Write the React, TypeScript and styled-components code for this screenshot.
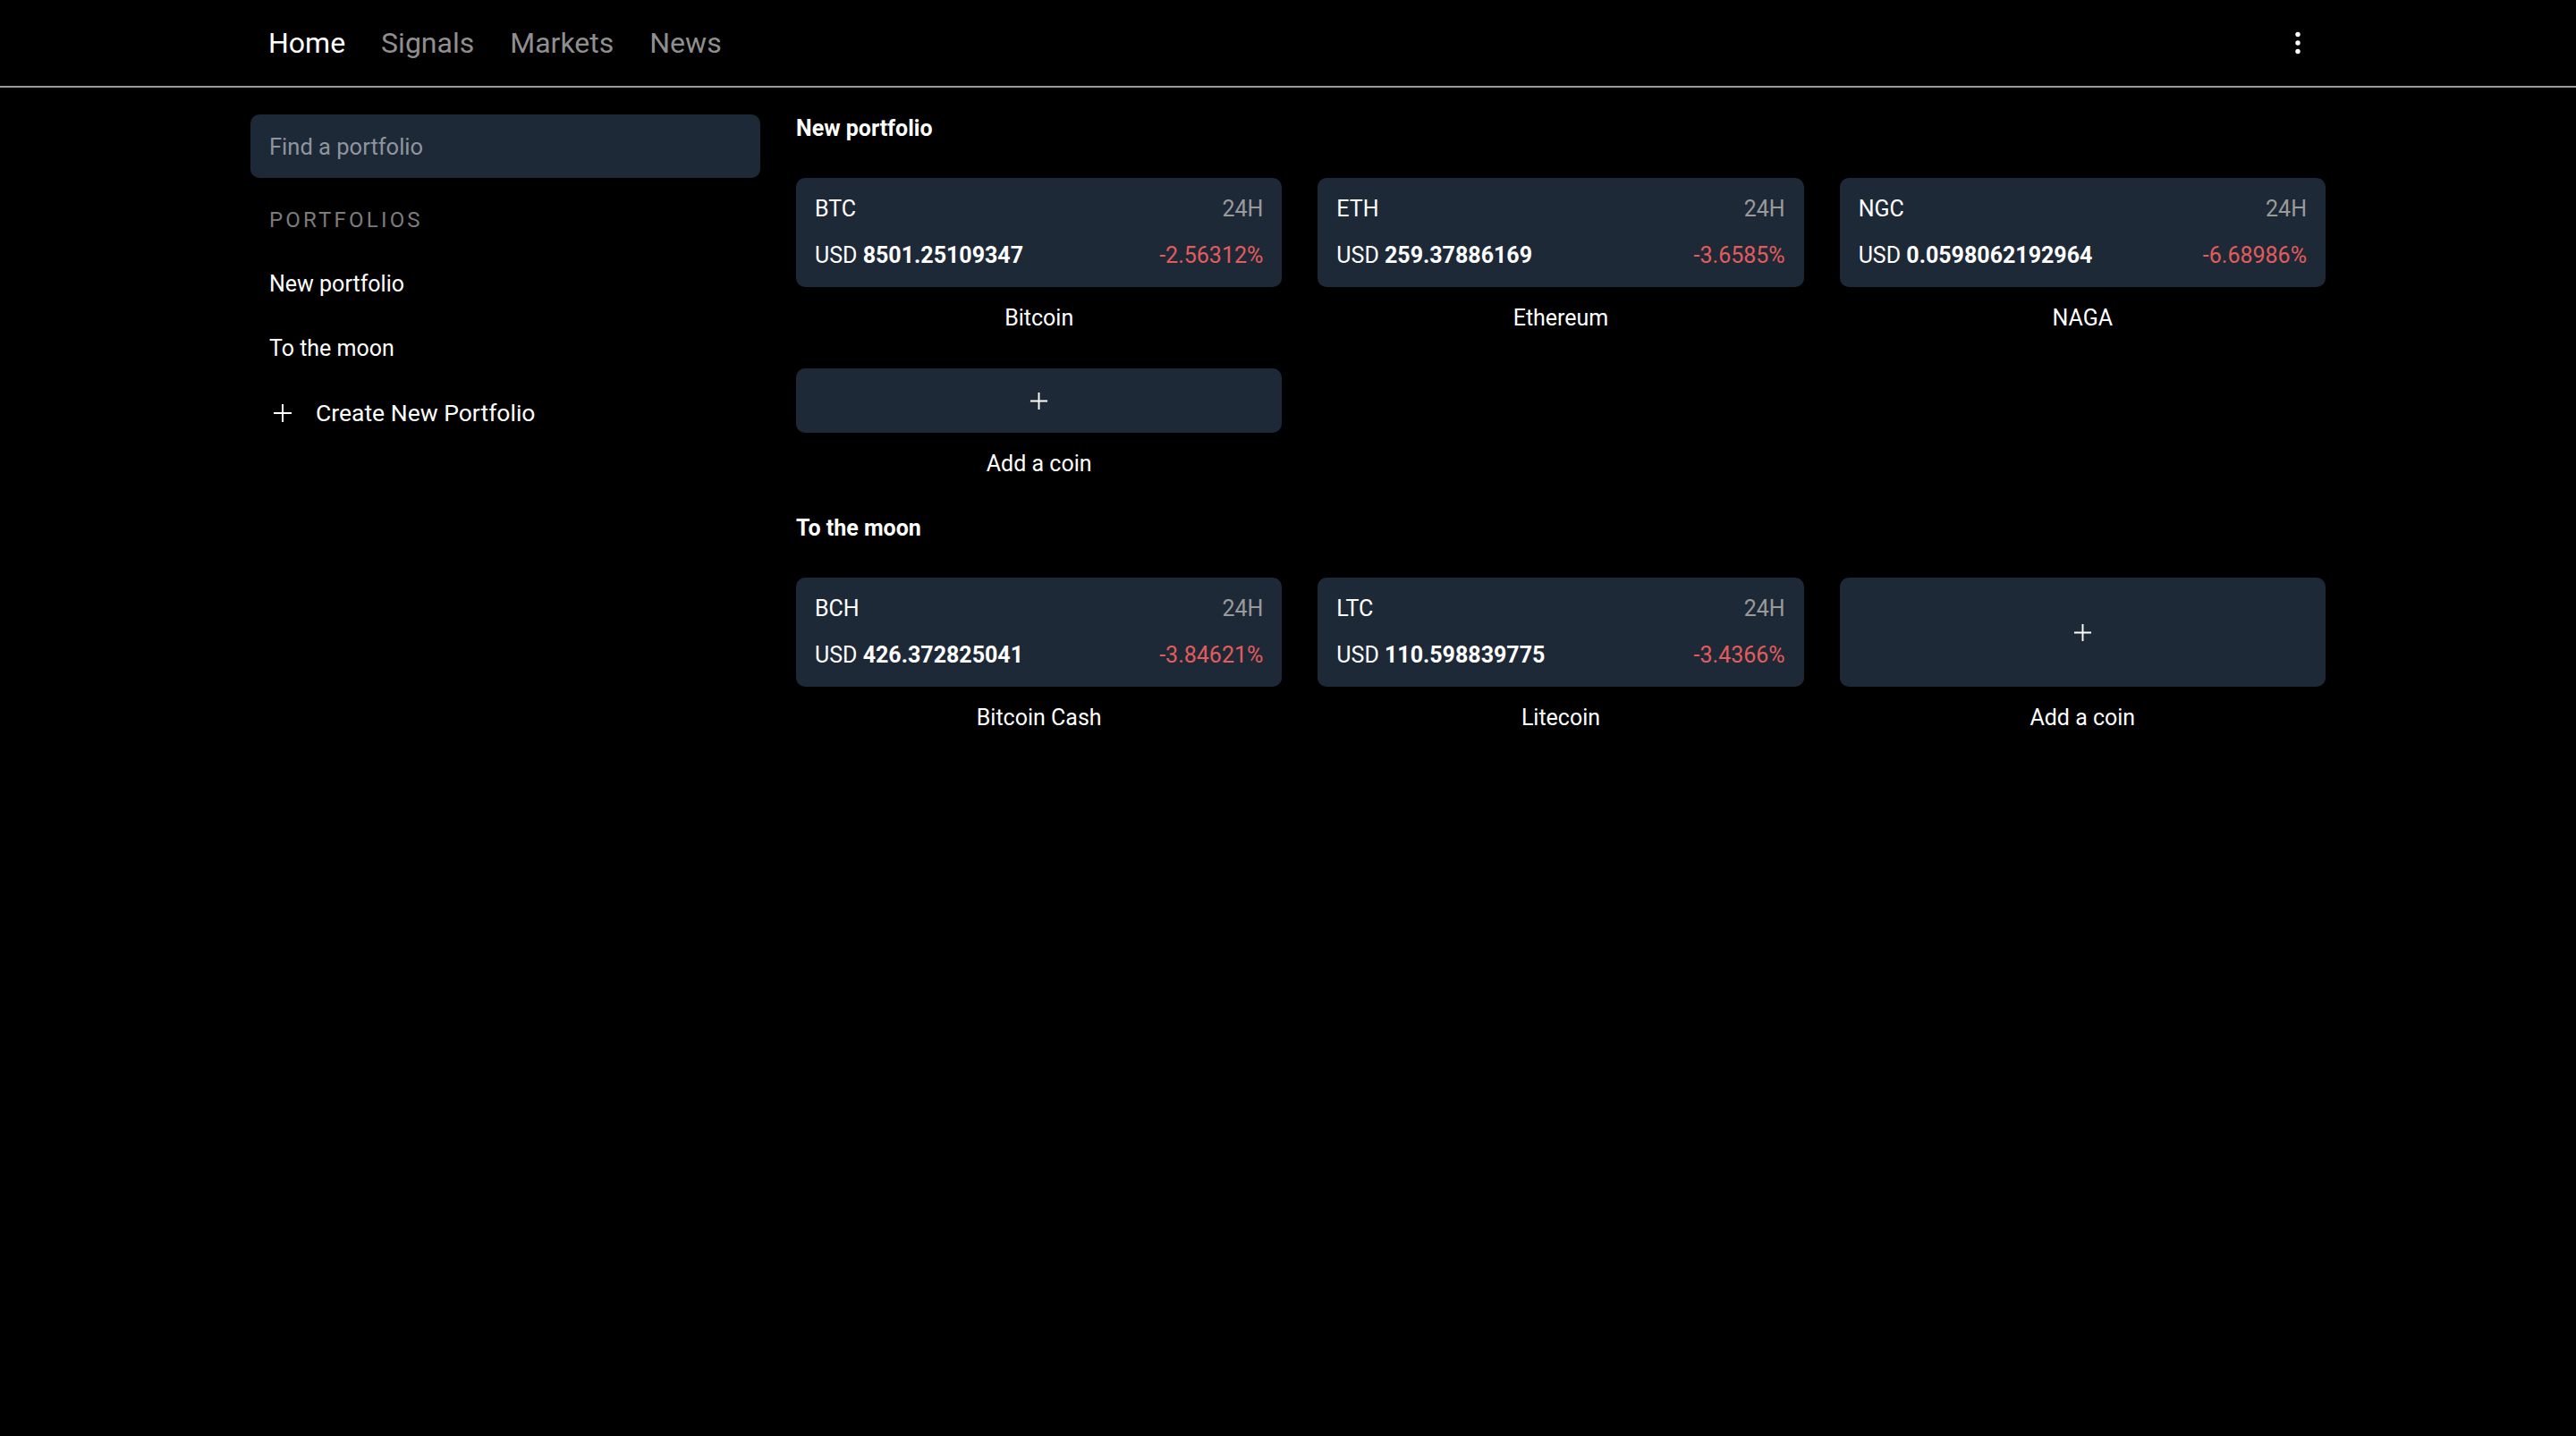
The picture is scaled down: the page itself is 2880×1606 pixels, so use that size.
import React from "react";
import styled, { createGlobalStyle } from "styled-components";

const GlobalStyle = createGlobalStyle`
  html, body { margin: 0; padding: 0; background: #000; }
  body {
    font-family: Roboto, "Noto Sans", "Liberation Sans", sans-serif;
    color: #fff;
    min-height: 1606px;
  }
  * { box-sizing: border-box; }
`;

const Header = styled.header`
  height: 98px;
  border-bottom: 2px solid #9b9b9b;
`;

const HeaderInner = styled.div`
  width: 2320px;
  height: 96px;
  margin: 0 auto;
  display: flex;
  align-items: center;
  justify-content: space-between;
`;

const Nav = styled.nav`
  display: flex;
  align-items: center;
`;

const NavItem = styled.a<{ $active?: boolean }>`
  font-size: 32px;
  line-height: 96px;
  padding: 0 20px;
  color: ${(p) => (p.$active ? "#ffffff" : "#8f8f8f")};
  text-decoration: none;
  cursor: pointer;
`;

const MenuButton = styled.button`
  width: 62px;
  height: 62px;
  background: transparent;
  border: none;
  padding: 0;
  display: flex;
  align-items: center;
  justify-content: center;
  cursor: pointer;
`;

const Layout = styled.div`
  width: 2320px;
  margin: 0 auto;
  display: flex;
  gap: 40px;
`;

const Sidebar = styled.aside`
  width: 570px;
  flex: none;
  padding-top: 30px;
`;

const Search = styled.input`
  width: 100%;
  height: 71px;
  border: none;
  outline: none;
  border-radius: 10px;
  background: #1e2938;
  color: #fff;
  font-family: inherit;
  font-size: 25.5px;
  padding: 0 21px;
  &::placeholder { color: #8f959e; }
`;

const SideList = styled.div`
  margin-top: 29px;
  display: flex;
  flex-direction: column;
  gap: 36px;
  padding-left: 21px;
`;

const SideLabel = styled.div`
  font-size: 24px;
  line-height: 36px;
  letter-spacing: 3.2px;
  color: #7c7c7c;
`;

const SideItem = styled.div<{ $large?: boolean }>`
  font-size: ${(p) => (p.$large ? "26.5px" : "25px")};
  line-height: 36px;
  color: #fff;
  display: flex;
  align-items: center;
  gap: 26px;
  cursor: pointer;
  & > svg { margin-left: 4px; }
`;

const Main = styled.main`
  flex: 1;
  padding-top: 28px;
  display: flex;
  flex-direction: column;
  gap: 36px;
`;

const Section = styled.section`
  display: flex;
  flex-direction: column;
  gap: 37px;
`;

const SectionTitle = styled.h2`
  margin: 0;
  font-size: 25px;
  line-height: 36px;
  font-weight: 700;
`;

const Grid = styled.div`
  display: grid;
  grid-template-columns: repeat(3, 1fr);
  column-gap: 40px;
  row-gap: 38px;
`;

const Tile = styled.div`
  display: flex;
  flex-direction: column;
  gap: 17px;
`;

const Card = styled.div`
  height: 122px;
  border-radius: 10px;
  background: #1e2938;
  padding: 17px 21px;
  display: flex;
  flex-direction: column;
  gap: 16px;
`;

const CardRow = styled.div`
  display: flex;
  justify-content: space-between;
  font-size: 25px;
  line-height: 36px;
`;

const Muted = styled.span`
  color: #9a9a9a;
`;

const Change = styled.span`
  color: #e35c5c;
`;

const Price = styled.b`
  font-weight: 700;
`;

const AddCard = styled.button<{ $tall?: boolean }>`
  height: ${(p) => (p.$tall ? "122px" : "72px")};
  border: none;
  border-radius: 10px;
  background: #1e2938;
  display: flex;
  align-items: center;
  justify-content: center;
  cursor: pointer;
  padding: 0;
`;

const TileLabel = styled.div`
  text-align: center;
  font-size: 25px;
  line-height: 36px;
`;

const Plus = ({ size = 22 }: { size?: number }) => (
  <svg width={size} height={size} viewBox="0 0 22 22">
    <path d="M11 1v20M1 11h20" stroke="#fff" strokeWidth="2" fill="none" />
  </svg>
);

type Coin = { sym: string; name: string; price: string; change: string };

const portfolios: { title: string; coins: Coin[] }[] = [
  {
    title: "New portfolio",
    coins: [
      { sym: "BTC", name: "Bitcoin", price: "8501.25109347", change: "-2.56312%" },
      { sym: "ETH", name: "Ethereum", price: "259.37886169", change: "-3.6585%" },
      { sym: "NGC", name: "NAGA", price: "0.0598062192964", change: "-6.68986%" },
    ],
  },
  {
    title: "To the moon",
    coins: [
      { sym: "BCH", name: "Bitcoin Cash", price: "426.372825041", change: "-3.84621%" },
      { sym: "LTC", name: "Litecoin", price: "110.598839775", change: "-3.4366%" },
    ],
  },
];

export default function App() {
  return (
    <>
      <GlobalStyle />
      <Header>
        <HeaderInner>
          <Nav>
            <NavItem $active>Home</NavItem>
            <NavItem>Signals</NavItem>
            <NavItem>Markets</NavItem>
            <NavItem>News</NavItem>
          </Nav>
          <MenuButton aria-label="menu">
            <svg width="10" height="30" viewBox="0 0 10 30">
              <circle cx="5" cy="5.5" r="2.7" fill="#fff" />
              <circle cx="5" cy="15" r="2.7" fill="#fff" />
              <circle cx="5" cy="24.5" r="2.7" fill="#fff" />
            </svg>
          </MenuButton>
        </HeaderInner>
      </Header>
      <Layout>
        <Sidebar>
          <Search placeholder="Find a portfolio" />
          <SideList>
            <SideLabel>PORTFOLIOS</SideLabel>
            {portfolios.map((p) => (
              <SideItem key={p.title}>{p.title}</SideItem>
            ))}
            <SideItem $large>
              <Plus size={22} />
              Create New Portfolio
            </SideItem>
          </SideList>
        </Sidebar>
        <Main>
          {portfolios.map((p) => (
            <Section key={p.title}>
              <SectionTitle>{p.title}</SectionTitle>
              <Grid>
                {p.coins.map((c) => (
                  <Tile key={c.sym}>
                    <Card>
                      <CardRow>
                        <span>{c.sym}</span>
                        <Muted>24H</Muted>
                      </CardRow>
                      <CardRow>
                        <span>
                          USD <Price>{c.price}</Price>
                        </span>
                        <Change>{c.change}</Change>
                      </CardRow>
                    </Card>
                    <TileLabel>{c.name}</TileLabel>
                  </Tile>
                ))}
                <Tile>
                  <AddCard $tall={p.coins.length % 3 !== 0}>
                    <Plus size={21} />
                  </AddCard>
                  <TileLabel>Add a coin</TileLabel>
                </Tile>
              </Grid>
            </Section>
          ))}
        </Main>
      </Layout>
    </>
  );
}
